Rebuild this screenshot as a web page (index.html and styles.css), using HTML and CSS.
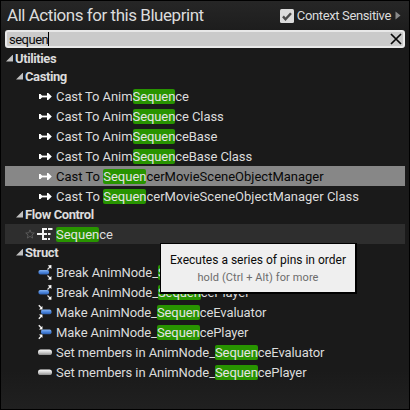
FILE: index.html
```html
<!DOCTYPE html>
<html lang="en">
<head>
    <meta charset="UTF-8">
    <meta name="viewport" content="width=device-width, initial-scale=1.0">
    <title>All Actions for this Blueprint</title>
    <link rel="stylesheet" href="styles.css">
</head>
<body>

    <svg width="0" height="0" class="defs">
        <defs>
            <linearGradient id="blue" x1="0" y1="0" x2="0" y2="1">
                <stop offset="0" stop-color="#86b4f4"/>
                <stop offset="0.5" stop-color="#4d86dc"/>
                <stop offset="1" stop-color="#2a5cae"/>
            </linearGradient>
            <linearGradient id="silver" x1="0" y1="0" x2="0" y2="1">
                <stop offset="0" stop-color="#ffffff"/>
                <stop offset="0.5" stop-color="#d2d2d2"/>
                <stop offset="1" stop-color="#8c8c8c"/>
            </linearGradient>
        </defs>
        <symbol id="cast" viewBox="0 0 16 16">
            <path d="M2 6 H3.6 L5.6 8.5 L3.6 11 H2 Z M10 5 H11.2 L14.8 8.5 L11.2 12 H10 Z" fill="#fff"/>
            <path d="M2 8.5 H12" stroke="#fff" stroke-width="1.8"/>
        </symbol>
        <symbol id="sequence" viewBox="0 0 16 16">
            <path d="M0 8 H10 M6 2 V14 M5 3 H10 M5 13 H10" stroke="#f4f4f4" stroke-width="2" fill="none"/>
            <path d="M11 3 H15.5 M11 8 H13.5 M11 13 H13" stroke="#f4f4f4" stroke-width="2"/>
        </symbol>
        <symbol id="break" viewBox="0 0 16 16">
            <rect x="1.5" y="6" width="10.5" height="4.6" rx="1.8" fill="url(#blue)"/>
            <path d="M10.5 5.5 L13 3 M10.5 11.5 L13 14" stroke="#ddd" stroke-width="1.2"/>
            <path d="M14.4 1 V5 L10.8 1.4 Z M14.4 15.8 V12 L10.8 15.4 Z" fill="#fff"/>
        </symbol>
        <symbol id="make" viewBox="0 0 16 16">
            <rect x="4" y="5.6" width="10.5" height="4.6" rx="1.8" fill="url(#blue)"/>
            <path d="M1.8 1.2 L5 4.5 M1.8 14.8 L5 11.5" stroke="#eee" stroke-width="1.4"/>
            <path d="M5.4 5.4 V2 L2 5.4 Z M5.4 10.4 V14 L2 10.4 Z" fill="#fff"/>
        </symbol>
        <symbol id="set" viewBox="0 0 16 16">
            <rect x="1" y="5.4" width="14" height="5.6" rx="2.6" fill="url(#silver)"/>
        </symbol>
    </svg>

    <div class="panel">
        <div class="header">
            <h1 class="title">All Actions for this Blueprint</h1>
            <div class="context">
                <svg class="checkbox" viewBox="0 0 14 14">
                    <rect width="14" height="14" rx="1.5" fill="#dcdcdc"/>
                    <path d="M3 7.4 L5.5 10.2 L11 4.2" stroke="#4a4a4a" stroke-width="2.4" fill="none"/>
                </svg>
                <span class="context-label">Context Sensitive</span>
                <svg class="more" viewBox="0 0 6 9"><path d="M0.5 0.5 L5.5 4.5 L0.5 8.5 Z" fill="#8a8a8a"/></svg>
            </div>
        </div>

        <div class="search">
            <span class="query">sequen</span><span class="caret"></span>
            <svg class="clear" viewBox="0 0 12 12"><path d="M1 1 L11 11 M11 1 L1 11" stroke="#080808" stroke-width="1.7"/></svg>
        </div>

        <div class="tree">
            <div class="group"><span class="arrow"></span>Utilities</div>

            <div class="group sub"><span class="arrow"></span>Casting</div>
            <div class="row"><svg class="icon"><use href="#cast"/></svg><span class="name tight">Cast To Anim<mark>Sequen</mark>ce</span></div>
            <div class="row"><svg class="icon"><use href="#cast"/></svg><span class="name tight">Cast To Anim<mark>Sequen</mark>ce Class</span></div>
            <div class="row"><svg class="icon"><use href="#cast"/></svg><span class="name tight">Cast To Anim<mark>Sequen</mark>ceBase</span></div>
            <div class="row"><svg class="icon"><use href="#cast"/></svg><span class="name tight">Cast To Anim<mark>Sequen</mark>ceBase Class</span></div>
            <div class="row selected"><svg class="icon"><use href="#cast"/></svg><span class="name">Cast To <mark>Sequen</mark>cerMovieSceneObjectManager</span></div>
            <div class="row"><svg class="icon"><use href="#cast"/></svg><span class="name">Cast To <mark>Sequen</mark>cerMovieSceneObjectManager Class</span></div>

            <div class="group sub"><span class="arrow"></span>Flow Control</div>
            <div class="row hovered">
                <svg class="star" viewBox="0 0 10 10"><path d="M5 0.9 L6.2 3.8 L9.3 4 L6.9 6 L7.7 9.1 L5 7.4 L2.3 9.1 L3.1 6 L0.7 4 L3.8 3.8 Z" fill="none" stroke="#5c5c5c" stroke-width="0.9"/></svg>
                <svg class="icon"><use href="#sequence"/></svg><span class="name"><mark>Sequen</mark>ce</span>
                <div class="tooltip">
                    <div class="tip-text">Executes a series of pins in order</div>
                    <div class="tip-hint">hold (Ctrl + Alt) for more</div>
                </div>
            </div>

            <div class="group sub"><span class="arrow"></span>Struct</div>
            <div class="row"><svg class="icon"><use href="#break"/></svg><span class="name tight">Break AnimNode_<mark>Sequen</mark>ceEvaluator</span></div>
            <div class="row"><svg class="icon"><use href="#break"/></svg><span class="name tight">Break AnimNode_<mark>Sequen</mark>cePlayer</span></div>
            <div class="row"><svg class="icon"><use href="#make"/></svg><span class="name tight">Make AnimNode_<mark>Sequen</mark>ceEvaluator</span></div>
            <div class="row"><svg class="icon"><use href="#make"/></svg><span class="name tight">Make AnimNode_<mark>Sequen</mark>cePlayer</span></div>
            <div class="row"><svg class="icon"><use href="#set"/></svg><span class="name tight">Set members in AnimNode_<mark>Sequen</mark>ceEvaluator</span></div>
            <div class="row"><svg class="icon"><use href="#set"/></svg><span class="name tight">Set members in AnimNode_<mark>Sequen</mark>cePlayer</span></div>
        </div>
    </div>

</body>
</html>
```
FILE: styles.css
```css
* {
    box-sizing: border-box;
}
body {
    margin: 0;
    background-color: #000;
    font-family: Roboto, sans-serif;
    font-size: 13px;
    color: #dcdcdc;
}
.defs {
    position: absolute;
}
.panel {
    width: 410px;
    height: 410px;
    padding: 0 4px;
    border: 1px solid #000;
    background: linear-gradient(#262626, #1a1a1a 40px, #1a1a1a 370px, #202020);
}
.header {
    display: flex;
    justify-content: space-between;
    height: 29px;
    padding: 0 4px 0 2px;
}
.title {
    margin: 0;
    font-size: 17px;
    font-weight: normal;
    letter-spacing: -0.46px;
    line-height: 29px;
    white-space: nowrap;
}
.context {
    display: flex;
    align-items: center;
}
.checkbox {
    width: 14px;
    height: 14px;
}
.context-label {
    margin: 0 4px 0 3px;
    letter-spacing: -0.36px;
    white-space: nowrap;
}
.more {
    width: 6px;
    height: 9px;
}
.search {
    display: flex;
    align-items: center;
    height: 18px;
    padding: 0 1px 0 2px;
    border: 2px solid #e8e8e8;
    border-radius: 3px;
    background-color: #cacaca;
    color: #0a0a0a;
}
.query {
    letter-spacing: -0.5px;
}
.caret {
    width: 1px;
    height: 14px;
    background-color: #000;
}
.clear {
    width: 12px;
    height: 12px;
    margin-left: auto;
}
.tree {
    padding-top: 2px;
}
.group {
    display: flex;
    align-items: center;
    height: 18px;
    padding: 0 0 2px 1px;
    font-weight: bold;
    letter-spacing: -0.4px;
}
.group.sub {
    padding-left: 11px;
}
.arrow {
    width: 7px;
    height: 7px;
    margin-right: 2px;
    background-color: #c0c0c0;
    clip-path: polygon(100% 0, 100% 100%, 0 100%);
}
.row {
    display: flex;
    align-items: center;
    position: relative;
    height: 20px;
    padding-left: 32px;
    white-space: nowrap;
}
.row.selected {
    background-color: #878787;
    color: #080808;
}
.row.hovered {
    padding-left: 20px;
    background-color: #2e2e2e;
}
.icon {
    width: 16px;
    height: 16px;
    margin-right: 3px;
}
.star {
    width: 10px;
    height: 10px;
    margin-right: 2px;
}
.tight {
    letter-spacing: -0.08px;
}
mark {
    border-radius: 2px;
    background-color: #289400;
    color: #e4e4e4;
}
.tooltip {
    position: absolute;
    top: 19px;
    left: 155px;
    z-index: 1;
    width: 197px;
    height: 51px;
    padding-top: 8px;
    border: 1px solid #000;
    border-right-width: 2px;
    border-bottom-width: 2px;
    background-color: #efefef;
    text-align: center;
}
.tip-text {
    line-height: 16px;
    font-size: 12px;
    color: #0a0a0a;
}
.tip-hint {
    margin-top: 2px;
    line-height: 16px;
    font-size: 11px;
    letter-spacing: 0.1px;
    color: #6c6c6c;
}
```
